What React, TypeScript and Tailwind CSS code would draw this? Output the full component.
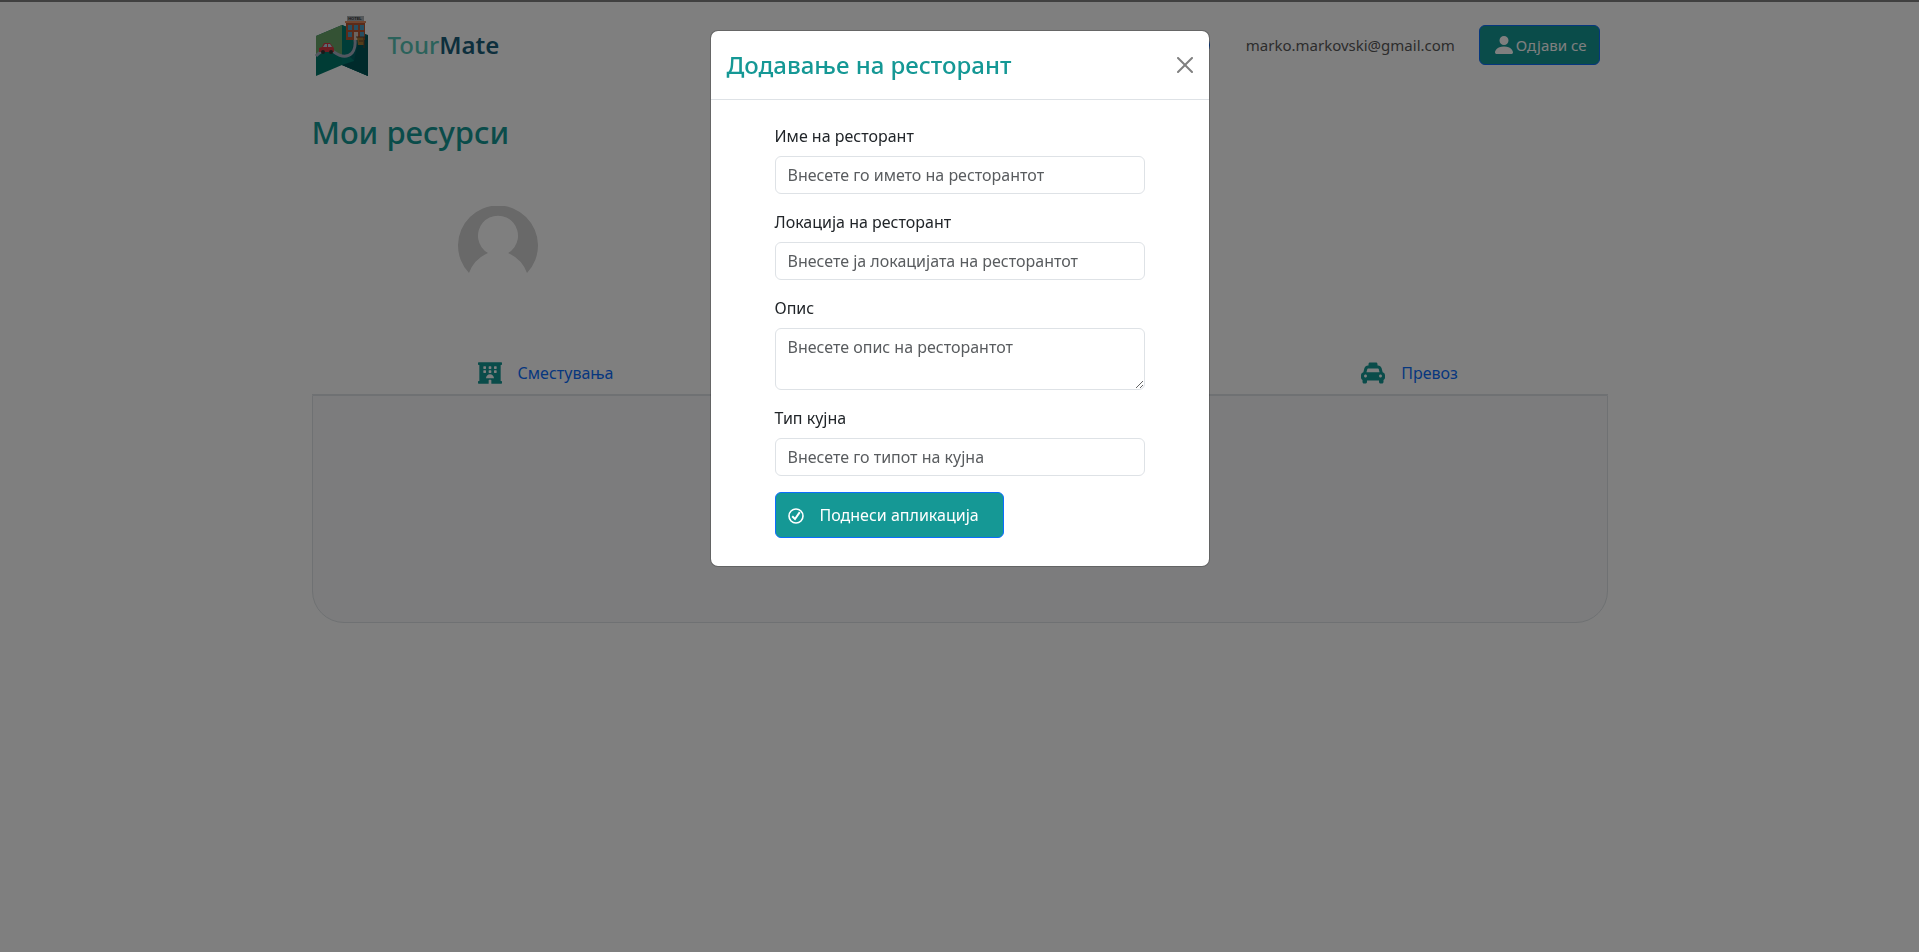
import { useState } from "react";
import { BsPersonFill } from "react-icons/bs";
import { FaHotel, FaTaxi, FaUtensils } from "react-icons/fa";

const fields = [
  { id: "name", label: "Име на ресторант", placeholder: "Внесете го името на ресторантот" },
  { id: "location", label: "Локација на ресторант", placeholder: "Внесете ја локацијата на ресторантот" },
  { id: "description", label: "Опис", placeholder: "Внесете опис на ресторантот", multiline: true },
  { id: "cuisine", label: "Тип кујна", placeholder: "Внесете го типот на кујна" },
];

const inputClass =
  "block w-full rounded-md border border-[#dee2e6] bg-white px-3 py-[6px] leading-6 text-[#212529] placeholder:text-[#595c5f]";

const Logo = () => (
  <svg width="56" height="64" viewBox="0 0 56 64" aria-hidden="true">
    <path d="M2 23 28 12V52L2 63Z" fill="#00786a" />
    <path d="M2 23 28 12V44L18 39Q10 34 2 43Z" fill="#69a569" />
    <path d="M28 12 54 22V63L28 52Z" fill="#006064" />
    <path d="M28 12 40 17V28L36 44 54 60V63L28 52Z" fill="#007a70" />
    <path d="M28 52 54 63V22L44 30 40 48Z" fill="#005457" />
    <path d="M2 43Q10 34 20 39Q31 47 38 40Q42 35 41 26" fill="none" stroke="#a4afc0" strokeWidth="3" />
    <path d="M32 8H51V27H32Z" fill="#b65632" />
    <path d="M31 8H52V10H31Z" fill="#e08a60" />
    <path d="M33 3H50V8H33Z" fill="#a9afb3" />
    <text x="41" y="7" textAnchor="middle" fontSize="4" fontWeight="700" fill="#333" fontFamily="Liberation Sans">
      HOTEL
    </text>
    <path d="M34 12h4v5h-4zM40 12h4v5h-4zM46 12h4v5h-4zM34 19h4v5h-4zM46 19h4v5h-4z" fill="#4f9fc4" />
    <path d="M40 19h4v8h-4z" fill="#d6c8c0" />
    <path d="M43 24h7v8h-6z" fill="#a77a32" />
    <path d="M42 24h9M50 24v11M45 28h4" stroke="#653e2a" strokeWidth="1" />
    <path d="M5 39v-4l3-1 2-4h6l3 4 1 1v4Z" fill="#d53b42" />
    <path d="M9 34l2-3h2v3ZM14 31h2l2 3h-4Z" fill="#b8d5e5" />
    <circle cx="9" cy="39" r="2" fill="#333" />
    <circle cx="17" cy="39" r="2" fill="#333" />
  </svg>
);

const Avatar = () => (
  <svg width="80" height="80" viewBox="0 0 80 80" role="img" aria-label="Профил">
    <path
      d="M11 67A40 40 0 1 1 69 67Q64 53 50 47A20 20 0 1 0 30 47Q16 53 11 67Z"
      fill="#d2d2d2"
    />
  </svg>
);

const CheckIcon = () => (
  <svg width="16" height="18" viewBox="0 0 16 18" fill="none" stroke="currentColor" aria-hidden="true">
    <circle cx="8" cy="10" r="7" strokeWidth="1.6" />
    <path d="M4.2 10.2 7 13 11.8 6.2" strokeWidth="2" />
  </svg>
);

const tabs = [
  { label: "Сместувања", icon: FaHotel },
  { label: "Ресторани", icon: FaUtensils },
  { label: "Превоз", icon: FaTaxi },
];

const RestaurantModal = ({ onClose }: { onClose: () => void }) => (
  <div className="fixed inset-0 flex items-start justify-center bg-black/50 pt-[30px]">
    <div
      role="dialog"
      aria-labelledby="modal-title"
      className="w-full max-w-[500px] rounded-lg border border-black/20 bg-white bg-clip-padding"
    >
      <div className="flex items-center justify-between border-b border-[#dee2e6] p-4">
        <h2 id="modal-title" className="text-2xl leading-9 font-medium text-[#159895]">
          Додавање на ресторант
        </h2>
        <button type="button" aria-label="Затвори" onClick={onClose} className="text-[#808080]">
          <svg width="16" height="16" viewBox="0 0 16 16" fill="currentColor">
            <path d="M.293.293a1 1 0 0 1 1.414 0L8 6.586 14.293.293a1 1 0 1 1 1.414 1.414L9.414 8l6.293 6.293a1 1 0 0 1-1.414 1.414L8 9.414l-6.293 6.293a1 1 0 0 1-1.414-1.414L6.586 8 .293 1.707a1 1 0 0 1 0-1.414z" />
          </svg>
        </button>
      </div>
      <form className="flex flex-col gap-4 px-16 pt-6 pb-7" onSubmit={(e) => e.preventDefault()}>
        {fields.map((field) => (
          <div key={field.id}>
            <label htmlFor={field.id} className="mb-2 block leading-6 text-[#212529]">
              {field.label}
            </label>
            {field.multiline ? (
              <textarea id={field.id} rows={2} placeholder={field.placeholder} className={inputClass} />
            ) : (
              <input id={field.id} type="text" placeholder={field.placeholder} className={inputClass} />
            )}
          </div>
        ))}
        <button
          type="submit"
          className="flex h-[46px] items-center gap-4 self-start rounded-md border border-[#0d6efd] bg-[#159895] pr-6 pl-3 text-white"
        >
          <CheckIcon />
          Поднеси апликација
        </button>
      </form>
    </div>
  </div>
);

const App = () => {
  const [open, setOpen] = useState(true);

  return (
    <div className="min-h-screen border-t-2 border-[#808080] bg-white font-['Noto_Sans',sans-serif] text-base text-[#212529]">
      <div className="mx-auto max-w-[1320px] px-3">
        <header className="flex h-[86px] items-center justify-between pr-2 pl-0.5">
          <a href="#" className="flex items-center gap-[18px] text-2xl font-medium">
            <Logo />
            <span className="text-[#57c5b6]">
              Tour<span className="font-semibold text-[#1a5f7a]">Mate</span>
            </span>
          </a>
          <div className="flex items-center text-[15px]">
            <button
              type="button"
              aria-label="Додај"
              onClick={() => setOpen(true)}
              className="mr-9 size-5 rounded-full bg-[#0d6efd]"
            />
            <span className="mr-6 text-[#595959]">marko.markovski@gmail.com</span>
            <button
              type="button"
              className="flex h-10 items-center rounded-md border border-[#0d6efd] bg-[#159895] px-3 text-white"
            >
              <BsPersonFill className="size-6" />
              Одјави се
            </button>
          </div>
        </header>

        <main>
          <h1 className="mt-6 text-[31px] leading-10 font-medium text-[#159895]">Мои ресурси</h1>
          <div className="mt-[54px] pl-[146px]">
            <Avatar />
          </div>

          <nav className="mt-16 grid grid-cols-3 border-b border-[#dee2e6]">
            {tabs.map(({ label, icon: Icon }) => (
              <a
                key={label}
                href="#"
                className="flex h-11 items-center justify-center gap-4 pt-0.5 pl-9 text-[#0d6efd]"
              >
                <Icon className="size-6 text-[#159895]" />
                {label}
              </a>
            ))}
          </nav>
          <section className="h-[228px] rounded-b-[32px] border border-[#dee2e6] bg-[#f8f9fa]" />
        </main>
      </div>
      {open && <RestaurantModal onClose={() => setOpen(false)} />}
    </div>
  );
};

export default App;
